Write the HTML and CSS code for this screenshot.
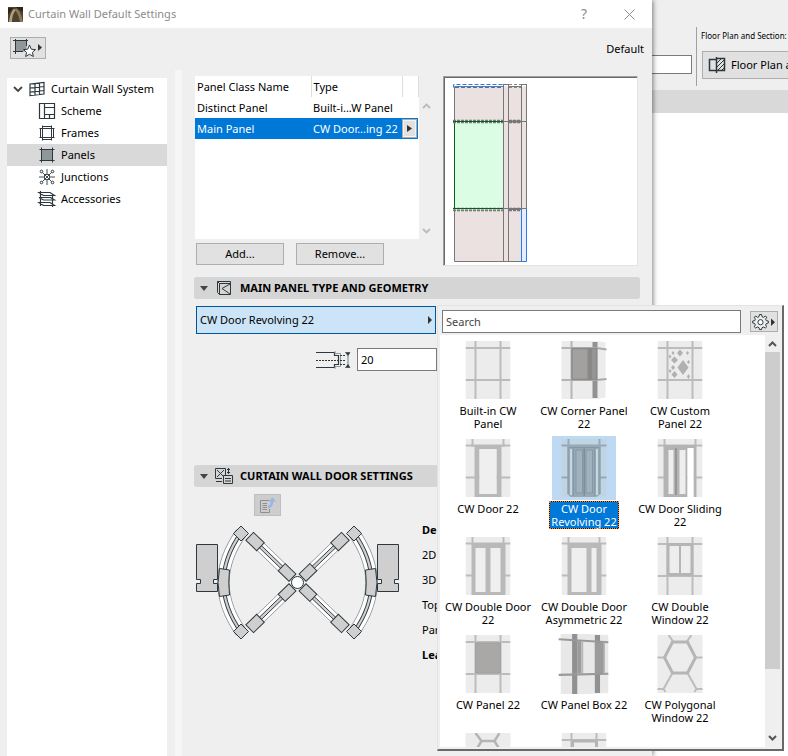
FILE: index.html
```html
<!DOCTYPE html>
<html lang="en">
<head>
<meta charset="utf-8">
<title>Curtain Wall Default Settings</title>
<link rel="stylesheet" href="styles.css">
</head>
<body>
<svg class="defs" aria-hidden="true">
  <defs>
    <symbol id="grid" viewBox="0 0 45 58">
      <rect width="45" height="58" fill="#ececec"/>
      <path d="M10 0V58M35 0V58M0 7H45M0 39H45" stroke="#bcbcbc" stroke-width="2" fill="none"/>
    </symbol>
    <symbol id="doorgrid" viewBox="0 0 45 58">
      <rect width="45" height="58" fill="#ececec"/>
      <path d="M7 0V8M38 0V8M0 6.500H45M0 38.500H45" stroke="#bcbcbc" stroke-width="2" fill="none"/>
    </symbol>
    <g id="arm">
      <rect x="19" y="-5" width="36" height="10" fill="#fff" stroke="#8a8f92" stroke-width=".8"/>
      <rect x="19" y="-1.500" width="36" height="3" fill="#cfcfcf" stroke="#2c383e" stroke-width=".9"/>
      <rect x="7" y="-5" width="15" height="10" fill="#cfcfcf" stroke="#2c383e"/>
      <rect x="51.500" y="-5.500" width="15" height="11" fill="#cfcfcf" stroke="#2c383e"/>
    </g>
    <g id="side">
      <path d="M46 8Q11 57.500 46 107" fill="none" stroke="#8a8f92" stroke-width="12"/>
      <path d="M46 8Q11 57.500 46 107" fill="none" stroke="#fff" stroke-width="10.500"/>
      <path d="M46 8Q11 57.500 46 107" fill="none" stroke="#2c383e" stroke-width="4"/>
      <path d="M46 8Q11 57.500 46 107" fill="none" stroke="#cfcfcf" stroke-width="2.200"/>
      <path d="M24.500 43.500L34.500 45Q33 57.500 34.500 70L24.500 71.500Q21.500 57.500 24.500 43.500Z" fill="#cfcfcf" stroke="#2c383e"/>
      <path d="M46 1L53.500 8.500L46 16L38.500 8.500ZM46 99L53.500 106.500L46 114L38.500 106.500Z" fill="#cfcfcf" stroke="#2c383e"/>
      <path d="M1.500 19.500H22.500V54.500H18.500V58.500H22.500V66.500H1.500V58.500H5.500V54.500H1.500Z" fill="#cfcfcf" stroke="#2c383e"/>
    </g>
  </defs>
</svg>

<div class="desktop">
  <main class="dialog">
    <header class="titlebar">
      <svg class="logo" viewBox="0 0 15 15"><rect width="15" height="15" fill="#4d4230"/><path d="M0 15V8L5 1H0ZM7 0H15V5Z" fill="#2c2519"/><path d="M1 15C2 8 4 3 6 2L8 3C5 6 4 10 4 15Z" fill="#b5a27c"/><path d="M8 1C12 4 14 9 15 15H12C11 9 9 5 7 3Z" fill="#8a7857"/></svg>
      <h1>Curtain Wall Default Settings</h1>
      <button class="tb-btn" aria-label="Help">?</button>
      <button class="tb-btn" aria-label="Close"><svg width="11" height="11" viewBox="0 0 11 11"><path d="M.5.5L10.500 10.500M10.500.5L.5 10.500" stroke="#8c8c8c" fill="none"/></svg></button>
    </header>

    <div class="topbar">
      <button class="fav" aria-label="Favorites">
        <svg width="32" height="20" viewBox="0 0 32 20"><rect x="4.500" y="2.500" width="11" height="11" fill="#8f979b"/><path d="M2 2.500H17M2 13.500H12M4.500 1V16M15.500 1V8" stroke="#2c383e" fill="none"/><path d="M18.500 7L20.300 11.200L24.500 11.600L21.400 14.400L22.400 18.500L18.500 16.300L14.600 18.500L15.600 14.400L12.500 11.600L16.700 11.200Z" fill="#fff" stroke="#2c383e"/><path d="M27 6V13L31 9.500Z" fill="#333"/></svg>
      </button>
      <span>Default</span>
    </div>

    <div class="panes">
      <nav class="tree" aria-label="Settings pages">
        <a href="#" class="root">
          <svg width="10" height="16" viewBox="0 0 10 16"><path d="M1 6L5 10L9 6" stroke="#444" stroke-width="1.800" fill="none"/></svg>
          <svg width="16" height="16" viewBox="0 0 16 16"><path d="M1 3L15 1.500V13L1 14.500ZM1 7L15 5.500M1 11L15 9.500M6 2.500V14M10.500 2V13.500" stroke="#2c383e" stroke-width="1.200" fill="none"/></svg>
          Curtain Wall System</a>
        <a href="#"><svg width="16" height="16" viewBox="0 0 16 16"><path d="M.5.5H15.500V15.500H.5ZM5.500.5V15.500M5.500 4.500H15.500M5.500 11.500H15.500M10.500 11.500V15.500" stroke="#2c383e" stroke-width="1.200" fill="none"/></svg>Scheme</a>
        <a href="#"><svg width="16" height="16" viewBox="0 0 16 16"><path d="M3.500 1.500H12.500M3.500 14.500H12.500M1.500 3.500V12.500M14.500 3.500V12.500M3.500 3.500H12.500V12.500H3.500ZM3.500 3.500V.5M12.500 3.500V.5M3.500 12.500V15.500M12.500 12.500V15.500M3.500 3.500H.5M12.500 3.500H15.500M3.500 12.500H.5M12.500 12.500H15.500" stroke="#2c383e" fill="none"/></svg>Frames</a>
        <a href="#" class="on" aria-current="page"><svg width="16" height="16" viewBox="0 0 16 16"><path d="M2.500 2.500H13.500V13.500H2.500Z" fill="#8f979b"/><path d="M.5 2.500H15.500M.5 13.500H15.500M2.500.5V15.500M13.500.5V15.500" stroke="#2c383e" fill="none"/></svg>Panels</a>
        <a href="#"><svg width="16" height="16" viewBox="0 0 16 16"><path d="M3 3L13 13M13 3L3 13M8 0V5M8 11V16M0 8H5M11 8H16M5.500 5.500H10.500V10.500H5.500Z" stroke="#2c383e" stroke-width=".9" fill="none"/><g fill="#fff" stroke="#2c383e"><circle cx="2.500" cy="2.500" r="1.300"/><circle cx="13.500" cy="2.500" r="1.300"/><circle cx="2.500" cy="13.500" r="1.300"/><circle cx="13.500" cy="13.500" r="1.300"/></g></svg>Junctions</a>
        <a href="#"><svg width="16" height="16" viewBox="0 0 16 16"><path d="M0 1.500H11L15.500 4.500H4.500ZM0 6.500H11.500L15.500 9H4.500L0 6.500M0 11.500H11L15.500 14.500H4.500ZM1.500 0V15M13.500 4V16" stroke="#2c383e" stroke-width="1.200" fill="none"/></svg>Accessories</a>
      </nav>
      <div class="splitter"></div>

      <div class="content">
        <div class="overview">
          <div class="classes">
            <div class="listrow">
              <div class="listbox">
                <table>
                  <thead><tr><th scope="col">Panel Class Name</th><th scope="col">Type</th><th class="more"></th></tr></thead>
                  <tbody>
                    <tr><td>Distinct Panel</td><td>Built-i...W Panel</td><td></td></tr>
                    <tr class="picked"><td>Main Panel</td><td>CW Door...ing 22</td><td><button class="mini" aria-label="Choose type"><svg width="5" height="7" viewBox="0 0 5 7"><path d="M0 0V7L5 3.500Z" fill="#333"/></svg></button></td></tr>
                  </tbody>
                </table>
              </div>
              <div class="arrows">
                <svg width="9" height="6" viewBox="0 0 9 6"><path d="M1 5L4.500 1.500L8 5" stroke="#bbb" stroke-width="1.800" fill="none"/></svg>
                <svg width="9" height="6" viewBox="0 0 9 6"><path d="M1 1L4.500 4.500L8 1" stroke="#bbb" stroke-width="1.800" fill="none"/></svg>
              </div>
            </div>
            <div class="actions"><button>Add...</button><button>Remove...</button></div>
          </div>
          <div class="preview">
            <svg width="90" height="186" viewBox="0 0 90 186">
              <path d="M9.500 8.500H81.500V183.500H9.500Z" fill="#eae1e0"/>
              <rect x="9.500" y="43.500" width="49" height="87" fill="#dafde4" stroke="#05631f"/>
              <path d="M9.500 43V8.500H58M9.500 131V183.500H81M58.500 6V183M63.500 6V183M76.500 6V183M81.500 6V131M58 6.500H64M76 6.500H82M58 43.500H82M58 130.500H82" stroke="#777" fill="none"/>
              <path d="M8 42.500H58M64 42.500H76M8 130.500H58M64 130.500H76M8 44.500H58M64 44.500H76M8 132.500H58M64 132.500H76" stroke="#777" stroke-width="1.500" stroke-dasharray="3 1" fill="none"/>
              <path d="M8 43.500H58M8 130.500H58" stroke="#05631f"/>
              <path d="M63 43.500H77M63 131H77" stroke="#777" stroke-width="2"/>
              <path d="M64 6.500H76M64 9.500H76" stroke="#888" stroke-dasharray="3 2"/>
              <path d="M64 8.500H76" stroke="#777"/>
              <path d="M8.500 9.500V6.500H58M10 9.500H58" stroke="#2a7bef" stroke-dasharray="4 2" fill="none"/>
              <path d="M76.500 131V183.500H81.500V131" fill="#e6edf8" stroke="#2a7bef"/>
            </svg>
          </div>
        </div>

        <section>
          <h2><svg width="8" height="5" viewBox="0 0 8 5"><path d="M0 0H8L4 5Z" fill="#444"/></svg><svg class="hicon" width="18" height="18" viewBox="0 0 18 18"><path d="M2.500 2.500H15.500V15.500H4.500L2.500 13.500ZM2.500 2.500L4.500 4.500V15.500M4.500 4.500H15.500M15 5L7 9.500L15 15" stroke="#2c383e" fill="none"/></svg>MAIN PANEL TYPE AND GEOMETRY</h2>
          <div class="geometry">
            <div class="chooser">
              <button class="combo" aria-haspopup="listbox" aria-expanded="true"><span>CW Door Revolving 22</span><svg width="4" height="8" viewBox="0 0 4 8"><path d="M0 0V8L4 4Z" fill="#333"/></svg></button>
              <div class="popup">
                <div class="find">
                  <input type="text" placeholder="Search" aria-label="Search">
                  <button class="gear" aria-label="Options"><svg width="24" height="18" viewBox="0 0 24 18"><path d="M7.500 1.500H9.500L10 3.700L11.500 4.300L13.500 3L14.700 4.300L13.600 6.200L14.300 7.700L16.300 8V10L14.300 10.500L13.600 12L14.700 13.800L13.400 15L11.500 14L10 14.700L9.500 16.600H7.500L7 14.700L5.500 14L3.600 15L2.300 13.800L3.300 12L2.700 10.500L.7 10V8L2.700 7.700L3.300 6.200L2.300 4.300L3.500 3L5.500 4.300L7 3.700Z" fill="#eee" stroke="#2c383e"/><circle cx="8.500" cy="9.200" r="2.600" fill="#fff" stroke="#2c383e"/><path d="M19 5.500V13L23 9.200Z" fill="#333"/></svg></button>
                </div>
                <div class="results">
                  <div class="items" role="listbox" aria-label="Panel types">
                    <button role="option"><svg viewBox="0 0 45 58"><use href="#grid"/></svg><span>Built-in CW<br>Panel</span></button>
                    <button role="option"><svg viewBox="0 0 45 58"><path d="M0 0H36L44 1.500V56.500L36 58H0Z" fill="#ececec"/><path d="M31 1H36V57H31Z" fill="#929292"/><path d="M10 0V58M0 7H35M0 39H35" stroke="#b5b5b5" stroke-width="2"/><path d="M35 7L45 8.500M35 39L45 38" stroke="#aaa" stroke-width="2"/><path d="M10.500 7.500H35V38.500H10.500Z" fill="#a3a19f" stroke="#8a8a8a" stroke-width="1.500"/><path d="M26 8H31V38H26Z" fill="#8a8886"/><path d="M31 8H34.500V38H31Z" fill="#979593"/></svg><span>CW Corner Panel 22</span></button>
                    <button role="option"><svg viewBox="0 0 45 58"><use href="#grid"/><path d="M25.500 19L31 26.500L25.500 34L20 26.500ZM22.500 8.500L25.500 12L22.500 15.500L19.500 12ZM17 15.500L20.500 19L17 22.500L13.500 19ZM17 30L20 33.500L17 37L14 33.500ZM15.500 10L17 12L15.500 14L14 12ZM30 10L31.500 12L30 14L28.500 12ZM12.500 13.500L14 15.500L12.500 17.500L11 15.500ZM31 19L32.500 21L31 23L29.500 21ZM15.500 24L17.500 26.500L15.500 29L13.500 26.500ZM12.500 28L14 30L12.500 32L11 30ZM31 33L32.500 35.500L31 38L29.500 35.500Z" fill="#b0b0b0"/></svg><span>CW Custom Panel 22</span></button>

                    <button role="option"><svg viewBox="0 0 45 58"><use href="#doorgrid"/><path d="M9 6H36V58H9ZM14 10V55H31V10Z" fill="#b9b9b9" fill-rule="evenodd"/><path d="M14 10H31V55H14Z" fill="#efefef"/></svg><span>CW Door 22</span></button>
                    <button role="option" aria-selected="true" class="sel"><svg viewBox="0 0 45 58"><path d="M0 0H45V58H0Z" fill="#c0d5e4"/><path d="M7 0V8M38 0V8M0 6.500H45M0 38.500H45" stroke="#93aab8" stroke-width="2"/><path d="M6 7H39V55L35 58H9L6 55Z" fill="#97a9b4"/><path d="M8.500 10H10.500V56H8.500ZM34.500 10H36.500V56H34.500Z" fill="#c3d8e6"/><path d="M14.500 11H21V54H14.500ZM24.500 11H31V54H24.500Z" fill="#9fb2be" stroke="#82949f" stroke-width=".8"/><path d="M22.700 8V57" stroke="#7c8e99" stroke-width="1.500"/><path d="M6.500 8V55M12 9V57M33 9V57M38.500 8V55M8 8.500H37" stroke="#82949f" stroke-width=".8"/></svg><span>CW Door Revolving 22</span></button>
                    <button role="option"><svg viewBox="0 0 45 58"><use href="#doorgrid"/><path d="M6 6H39V58H36V10H30V58H6Z" fill="#b3b3b3"/><path d="M30 9H36V58H30Z" fill="#fff"/><path d="M11 11H16V55H11ZM22 11H28V55H22Z" fill="#eee"/><path d="M18.500 9V56" stroke="#969696" stroke-width="2"/></svg><span>CW Door Sliding 22</span></button>

                    <button role="option"><svg viewBox="0 0 45 58"><use href="#doorgrid"/><path d="M6 6H40V58H6Z" fill="#b9b9b9"/><path d="M10 11H20V55H10ZM25 11H35V55H25Z" fill="#efefef"/></svg><span>CW Double Door 22</span></button>
                    <button role="option"><svg viewBox="0 0 45 58"><use href="#doorgrid"/><path d="M6 6H40V58H6Z" fill="#b9b9b9"/><path d="M10 11H25V55H10ZM30 11H35V55H30Z" fill="#efefef"/></svg><span>CW Double Door Asymmetric 22</span></button>
                    <button role="option"><svg viewBox="0 0 45 58"><use href="#grid"/><path d="M10.500 7.500H34.500V37.500H10.500Z" stroke="#b5b5b5" stroke-width="3" fill="#ededed"/><path d="M22.500 8V37" stroke="#b5b5b5" stroke-width="2"/></svg><span>CW Double Window 22</span></button>

                    <button role="option"><svg viewBox="0 0 45 58"><use href="#grid"/><path d="M10 8H35V38H10Z" fill="#a9a8a6" stroke="#a0a0a0"/></svg><span>CW Panel 22</span></button>
                    <button role="option"><svg class="wide" viewBox="-4 0 49 58"><path d="M-2 -1L44 1V57L-2 59Z" fill="#e8e8e8"/><path d="M9 0H14V59H9ZM31 1H36V57H31Z" fill="#919191"/><path d="M14 7H18V38H14ZM31 8H40V38H31Z" fill="#9b9b9b"/><path d="M-4 5L44 8M-4 39.500L44 38.500" stroke="#999" stroke-width="2"/><path d="M19 7V38M40 8V38" stroke="#b5b5b5" stroke-width="1.500"/></svg><span>CW Panel Box 22</span></button>
                    <button role="option"><svg viewBox="0 0 45 58"><rect width="45" height="58" fill="#ececec"/><path d="M11 0L16 7M34 0L29 7M0 22.500H7M38 22.500H45M15 38L6 54H0M30 38L39 54H45M6 54L8 57M39 54L37 57" stroke="#bcbcbc" stroke-width="2" fill="none"/><path d="M15 7H30L38 22.500L30 38H15L7 22.500Z" stroke="#b5b5b5" stroke-width="3" fill="#ededed"/></svg><span>CW Polygonal Window 22</span></button>

                    <button role="option" aria-label="Polygonal panel"><svg viewBox="0 0 45 58"><rect width="45" height="58" fill="#ececec"/><path d="M10 0L16 8H29L34 0M16 8L10 18M29 8L35 18" stroke="#b5b5b5" stroke-width="2.500" fill="none"/></svg></button>
                    <button role="option" aria-label="Window"><svg viewBox="0 0 45 58"><use href="#grid"/><path d="M11 8H35V38H11Z" stroke="#b5b5b5" stroke-width="3" fill="#ededed"/></svg></button>
                  </div>
                  <div class="scroll">
                    <svg width="15" height="17" viewBox="0 0 15 17"><path d="M4 11L7.500 7.500L11 11" stroke="#555" stroke-width="2" fill="none"/></svg>
                    <div class="thumb"></div>
                    <svg width="15" height="17" viewBox="0 0 15 17"><path d="M4 6L7.500 9.500L11 6" stroke="#555" stroke-width="2" fill="none"/></svg>
                  </div>
                </div>
              </div>
            </div>
            <label class="thickness">
              <svg width="36" height="18" viewBox="0 0 36 18"><path d="M0 1.500H18.500V4.500H22.500V13.500H18.500V16.500H0" stroke="#2c383e" stroke-width="1.200" fill="none"/><path d="M19 0V2.500H24.500V15.500H19V18" stroke="#999" fill="none"/><path d="M0 9.500H30M24 4.500H30M24 13.500H30" stroke="#2c383e" stroke-dasharray="2 1"/><path d="M29.500 1.500H34L32 4.500ZM29.500 16.500H34L32 13.500ZM32 3V15" fill="#2c383e" stroke="#2c383e" stroke-width=".6"/></svg>
              <input type="text" value="20" aria-label="Panel thickness">
            </label>
          </div>
        </section>

        <section class="door">
          <h2><svg width="8" height="5" viewBox="0 0 8 5"><path d="M0 0H8L4 5Z" fill="#444"/></svg><svg class="hicon" width="18" height="18" viewBox="0 0 18 18"><path d="M.5 1.500H10.500V11M.5 1.500V11.500H7M2 3L9 10M9 3L2 10M13.500 1V7M12 2.500H15M12 5.500H15M1 14.500H7" stroke="#2c383e" fill="none"/><path d="M8.500 8.500H17.500V16.500H8.500Z" fill="#d5d5d5" stroke="#2c383e"/><path d="M10 11.500H16M10 14H16" stroke="#2c383e"/></svg>CURTAIN WALL DOOR SETTINGS</h2>
          <div class="doorbody">
            <div class="figure">
              <button class="transfer" disabled aria-label="Transfer settings"><svg width="17" height="17" viewBox="0 0 17 17"><path d="M10 3.500H1.500V15.500H10.500V12M3.500 6.500H8M3.500 8.500H8M3.500 10.500H8M3.500 12.500H8" stroke="#8f8f8f" fill="none"/><path d="M9 10C12 10 13 8 13 4" stroke="#94b7ea" stroke-width="2.500" fill="none"/><path d="M9.500 4.500L13.500.5L17 4.500Z" fill="#94b7ea"/></svg></button>
              <svg class="plan" width="205" height="116" viewBox="0 0 205 116">
                <use href="#side"/><use href="#side" transform="translate(205 0) scale(-1 1)"/>
                <g transform="translate(102.500 57.500)"><use href="#arm" transform="rotate(44)"/><use href="#arm" transform="rotate(136)"/><use href="#arm" transform="rotate(224)"/><use href="#arm" transform="rotate(316)"/><circle r="6" fill="#fff" stroke="#2c383e"/></g>
              </svg>
            </div>
            <ul class="params"><li><b>De</b></li><li>2D</li><li>3D</li><li>Top</li><li>Par</li><li><b>Lea</b></li></ul>
          </div>
        </section>
      </div>
    </div>
  </main>

  <aside class="app">
    <div class="appbar">
      <input type="text" class="appinput" aria-label="Value">
      <div class="group">
        <span>Floor Plan and Section:</span>
        <button><svg width="18" height="16" viewBox="0 0 18 16"><path d="M8 2.500H1.500V13.500H8" stroke="#2c383e" stroke-width="1.500" fill="none"/><path d="M8.500 0V16M8 1.500H16.500V13.500H8" stroke="#2c383e" stroke-width="1.500" fill="none"/><path d="M9 6L13 2M9 10L16 3M10 13L16 7M14 13L16 11" stroke="#2c383e"/></svg>Floor Plan and Section</button>
      </div>
    </div>
    <div class="tabs"></div>
  </aside>
</div>
</body>
</html>
```

FILE: styles.css
```css
* { box-sizing: border-box; }
body {
  margin: 0;
  background: #fff;
  color: #000;
  font: 11px/16px "Noto Sans", "Open Sans", sans-serif;
}
button, input { font: inherit; color: inherit; padding: 0; border-radius: 0; }
button { background: #e1e1e1; border: 1px solid #adadad; }
svg { flex: none; display: block; overflow: visible; }
.defs { position: absolute; width: 0; height: 0; }

.desktop {
  display: grid;
  grid-template-columns: minmax(0, 1fr) 136px;
  height: 100vh;
  overflow: hidden;
}
.dialog {
  display: flex;
  flex-direction: column;
  background: #efefef;
  position: relative;
  z-index: 1;
  box-shadow: 1px 0 5px rgba(0, 0, 0, .5);
}
.titlebar {
  display: flex;
  align-items: center;
  height: 28px;
  padding: 0 8px;
  background: #fff;
  color: #8c8c8c;
}
.logo { width: 15px; height: 15px; margin-right: 5px; }
.titlebar h1 { flex: 1; margin: 0; font-size: 11px; font-weight: 400; line-height: 26px; }
.tb-btn {
  display: grid;
  place-items: center;
  width: 30px;
  height: 24px;
  margin-left: 15px;
  border: 0;
  background: none;
  font-size: 14px;
}
.topbar {
  display: flex;
  justify-content: space-between;
  align-items: center;
  height: 42px;
  padding: 0 8px 0 10px;
}
.fav { width: 36px; height: 22px; margin-bottom: 2px; }

.panes { flex: 1; display: flex; min-height: 0; }
.tree { width: 160px; margin: 8px 8px 0 7px; background: #fff; }
.tree a {
  display: flex;
  align-items: center;
  gap: 6px;
  height: 22px;
  padding-left: 32px;
  color: #000;
  text-decoration: none;
}
.tree .root { padding-left: 6px; }
.tree .on { background: #d9d9d9; }
.splitter { width: 7px; background: #f6f6f6; }
.content { flex: 1; min-width: 0; padding: 6px 12px 0; }

.overview { display: flex; height: 190px; }
.classes { flex: none; width: 241px; padding-left: 1px; }
.listrow { display: flex; height: 163px; }
.listbox { width: 224px; background: #fff; }
.arrows {
  flex: 1;
  display: flex;
  flex-direction: column;
  align-items: center;
  justify-content: space-between;
  padding: 27px 2px 5px 0;
}
table { width: 223px; border-collapse: collapse; table-layout: fixed; }
th, td { height: 21px; padding: 0 2px; text-align: left; font-weight: 400; white-space: nowrap; }
th { width: 116px; border-right: 1px solid #dedede; }
th:nth-child(2) { width: 91px; }
th.more { width: 16px; }
td:last-child { padding: 0; }
.picked { background: #0078d7; color: #fff; }
.mini { display: grid; place-items: center; width: 15px; height: 19px; color: #333; box-shadow: inset 0 0 0 1px #f4f4f4; }
.actions { display: flex; gap: 12px; padding: 4px 0 0 1px; }
.actions button { width: 88px; height: 22px; }
.preview {
  flex: 1;
  margin: 0 2px 0 8px;
  background: #fff;
  border: 1px solid #a0a0a0;
  border-right-color: #e3e3e3;
  border-bottom-color: #e3e3e3;
  box-shadow: inset 1px 1px #696969;
  padding: 1px;
}

section h2 {
  display: flex;
  align-items: center;
  height: 22px;
  margin: 11px 0 0;
  padding-left: 6px;
  background: #d5d5d5;
  border-radius: 3px;
  font-size: 11px;
  font-weight: 700;
}
.hicon { margin: 0 7px; }
.geometry { height: 166px; padding: 7px 0 0 2px; }
.chooser { position: relative; width: 240px; }
.combo {
  display: flex;
  align-items: center;
  justify-content: space-between;
  width: 100%;
  height: 28px;
  padding: 0 3px;
  background: #cce4f7;
  border-color: #00559b;
}
.thickness { display: flex; align-items: center; gap: 5px; margin: 14px 0 0 120px; }
.thickness input { width: 80px; height: 23px; padding-left: 3px; border: 1px solid #7a7a7a; background: #fff; }

.door h2 { margin: 0; }
.doorbody { display: flex; padding-top: 7px; }
.figure { flex: none; width: 228px; padding-left: 1px; }
.transfer {
  display: grid;
  place-items: center;
  width: 27px;
  height: 22px;
  margin: 0 0 9px 59px;
  background: #cdcdcd;
  border-color: #bfbfbf;
}
.params { list-style: none; margin: 0; padding: 23px 0 0; line-height: 25px; }

.popup {
  position: absolute;
  left: 241px;
  top: -1px;
  z-index: 2;
  display: flex;
  flex-direction: column;
  width: 347px;
  height: 446px;
  padding: 0 2px 2px;
  background: #efefef;
  border: 1px solid #e3e3e3;
  border-right: 2px solid #696969;
  border-bottom: 2px solid #696969;
}
.find { display: flex; align-items: center; gap: 9px; padding: 4px 2px 2px 2px; }
.find input { flex: 1; min-width: 0; height: 23px; padding-left: 3px; border: 1px solid #7a7a7a; background: #fff; }
.find input::placeholder { color: #444; opacity: 1; }
.gear { display: grid; place-items: center; width: 28px; height: 21px; }
.results { flex: 1; display: flex; min-height: 0; background: #fff; }
.items {
  flex: 1;
  display: grid;
  grid-template-columns: repeat(3, 96px);
  grid-auto-rows: 98px;
  padding-top: 3px;
  overflow: hidden;
}
.items button {
  display: flex;
  flex-direction: column;
  align-items: center;
  gap: 1px;
  border: 0;
  background: none;
  line-height: 13px;
}
.items svg { width: 64px; height: 64px; padding: 3px 9px; overflow: hidden; }
.items .wide { padding: 2px 6px; }
.items span { border: 1px solid transparent; max-width: 92px; }
.sel svg { background: #bddaf2; }
.items .sel span {
  max-width: 70px;
  background: #0078d7;
  color: #fff;
  border-color: #201408;
  outline: 1px dotted #ff8728;
  outline-offset: -1px;
}
.scroll { display: flex; flex-direction: column; width: 15px; background: #efefef; }
.thumb { height: 317px; margin-bottom: auto; background: #cdcdcd; }

.app { display: flex; flex-direction: column; min-width: 0; overflow: hidden; }
.appbar { display: flex; height: 90px; background: #efefef; border-bottom: 0; }
.appinput { flex: none; width: 40px; height: 19px; margin: 55px 4px 0 0; border: 1px solid #7a7a7a; border-left: 0; background: #fff; }
.group { flex: none; margin: 27px 0 4px; padding-left: 4px; border-left: 1px solid #a0a0a0; white-space: nowrap; }
.group span { display: block; height: 24px; line-height: 18px; font-size: 8px; }
.group button { display: flex; align-items: center; gap: 5px; height: 28px; padding: 0 5px; margin-left: 1px; }
.tabs { height: 23px; background: #d9d9d9; }
```
